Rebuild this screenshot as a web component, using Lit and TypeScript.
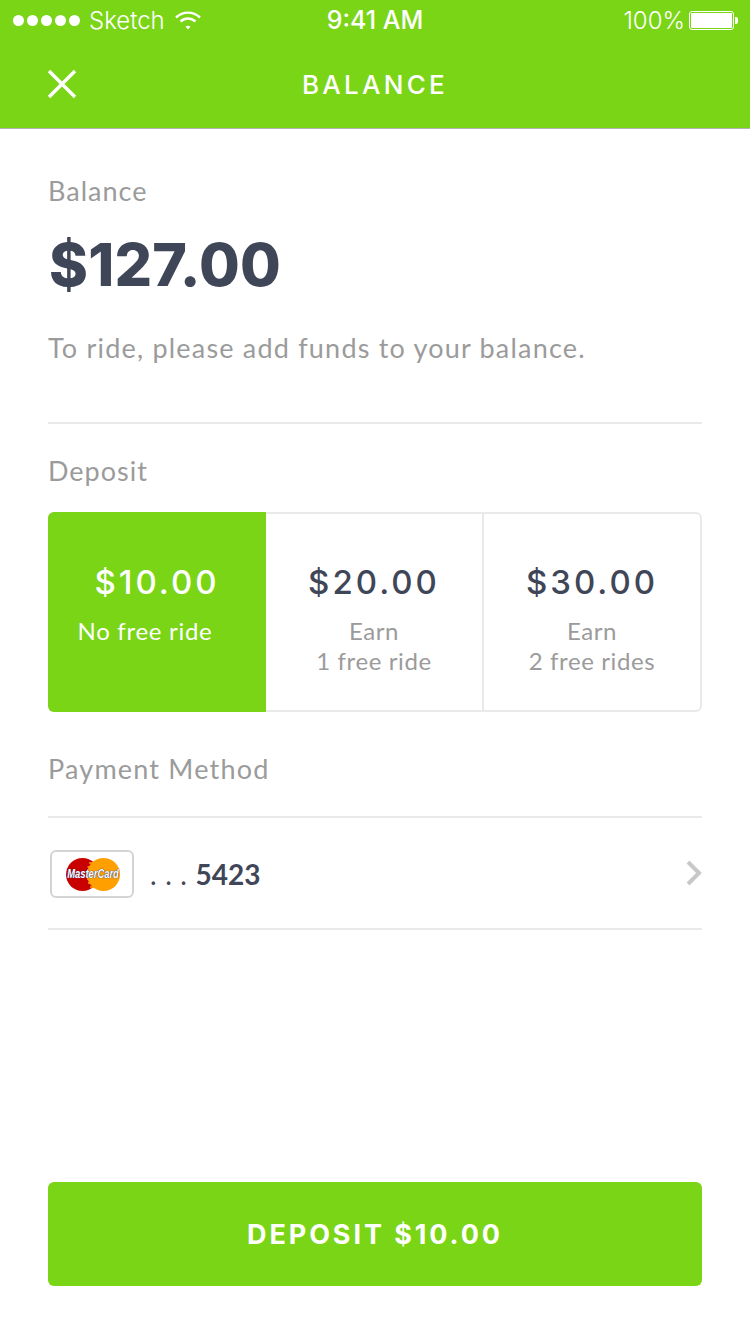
import {html, css, LitElement} from 'lit';
import {customElement} from 'lit/decorators.js';

const options = [
  {amount: '$10.00', lines: ['No free ride'], active: true},
  {amount: '$20.00', lines: ['Earn', '1 free ride'], active: false},
  {amount: '$30.00', lines: ['Earn', '2 free rides'], active: false},
];

@customElement('app-root')
class AppRoot extends LitElement {
  static styles = css`
    :host {
      display: block;
      width: 750px;
      height: 1334px;
      background: #fff;
      font-family: 'Lato', sans-serif;
      overflow: hidden;
    }

    .header {
      background: #7ad516;
      color: #fff;
      height: 128px;
      border-bottom: 1px solid #b2b2b2;
    }

    .status {
      height: 40px;
      display: grid;
      grid-template-columns: 1fr auto 1fr;
      align-items: center;
      padding: 0 12px;
      font-family: 'Inter', sans-serif;
      font-weight: 300;
      font-size: 24px;
    }

    .status-left,
    .status-right {
      display: flex;
      align-items: center;
    }

    .status-right {
      justify-content: flex-end;
    }

    .dots {
      display: flex;
      gap: 3px;
      margin-right: 9px;
      margin-left: 1px;
    }

    .dot {
      width: 11px;
      height: 11px;
      border-radius: 50%;
      background: #fff;
    }

    .wifi {
      margin-left: 10px;
    }

    .time {
      font-weight: 500;
      font-size: 25px;
    }

    .battery {
      display: flex;
      align-items: center;
      margin-left: 4px;
    }

    .battery-body {
      width: 45px;
      height: 19px;
      box-sizing: border-box;
      border: 1px solid #fff;
      border-radius: 3px;
      padding: 1px;
    }

    .battery-fill {
      height: 100%;
      background: #fff;
      border-radius: 1px;
    }

    .battery-cap {
      width: 3px;
      height: 7px;
      margin-left: 1px;
      background: #fff;
      border-radius: 0 2px 2px 0;
    }

    .nav {
      height: 88px;
      display: flex;
      align-items: center;
      justify-content: center;
      position: relative;
    }

    .close {
      position: absolute;
      left: 47px;
      top: 29px;
      display: block;
    }

    .title {
      font-family: 'Inter', sans-serif;
      font-size: 26px;
      font-weight: 500;
      letter-spacing: 3.3px;
    }

    .content {
      padding: 0 48px;
    }

    .label {
      color: #9b9b9b;
      font-size: 27px;
      line-height: 36px;
      letter-spacing: 1px;
    }

    .balance {
      padding: 44px 0 56px;
      border-bottom: 2px solid #e9e9e9;
    }

    .balance-value {
      margin: 20px 0 0 1px;
      color: #3f4657;
      font-family: 'Inter', sans-serif;
      font-size: 59px;
      line-height: 72px;
      font-weight: 800;
      letter-spacing: 0.2px;
    }

    .hint {
      margin-top: 29px;
      letter-spacing: 1.2px;
    }

    .deposit-label {
      margin-top: 29px;
    }

    .options {
      margin-top: 23px;
      display: grid;
      grid-template-columns: 216px 216px 218px;
      height: 200px;
      box-sizing: border-box;
      border: 2px solid #e9e9e9;
      border-radius: 6px;
    }

    .option {
      box-sizing: border-box;
      margin: -2px 0;
      padding-top: 48px;
      text-align: center;
      color: #9b9b9b;
    }

    .option:first-child {
      margin-left: -2px;
    }

    .option:last-child {
      margin-right: -2px;
      padding-right: 2px;
      border-left: 2px solid #e9e9e9;
    }

    .option.active {
      background: #7ad516;
      color: #fff;
      border-radius: 6px 0 0 6px;
    }

    .amount {
      color: #3f4657;
      font-family: 'Inter', sans-serif;
      font-size: 33px;
      line-height: 44px;
      font-weight: 500;
      letter-spacing: 3px;
    }

    .active .amount {
      color: #fff;
    }

    .note {
      margin-top: 12px;
      font-size: 24px;
      line-height: 30px;
      letter-spacing: 0.6px;
    }

    .active .note {
      padding-right: 24px;
      letter-spacing: 0.7px;
    }

    .method-label {
      margin-top: 39px;
      letter-spacing: 1.2px;
    }

    .card-row {
      margin-top: 29px;
      height: 114px;
      box-sizing: border-box;
      border-top: 2px solid #e9e9e9;
      border-bottom: 2px solid #e9e9e9;
      display: flex;
      align-items: center;
      padding: 2px 0 0 2px;
    }

    .card {
      width: 84px;
      height: 48px;
      box-sizing: border-box;
      border: 2px solid #d4d4d4;
      border-radius: 6px;
      padding-left: 2px;
      display: flex;
      align-items: center;
      justify-content: center;
      position: relative;
    }

    .card-name {
      position: absolute;
      left: 2px;
      right: 0;
      top: 13px;
      text-align: center;
      color: #fff;
      font-family: 'Liberation Sans', sans-serif;
      font-size: 12px;
      line-height: 18px;
      font-weight: 700;
      font-style: italic;
      transform: scaleX(0.78);
      text-shadow: 0 0 1px #27306b, 0 0 1px #27306b;
    }

    .card-number {
      margin-left: 16px;
      color: #3f4657;
      font-size: 28px;
      font-weight: 700;
      flex: 1;
    }

    .card-dots {
      font-weight: 400;
      letter-spacing: 0.7px;
    }

    .chevron {
      margin-top: -2px;
    }

    .submit {
      display: block;
      width: 100%;
      margin-top: 252px;
      height: 104px;
      border: none;
      border-radius: 6px;
      background: #7ad516;
      color: #fff;
      font-family: 'Inter', sans-serif;
      font-size: 27px;
      font-weight: 700;
      letter-spacing: 2.9px;
    }
  `;

  render() {
    return html`
      <div class="header">
        <div class="status">
          <div class="status-left">
            <div class="dots">
              ${[0, 1, 2, 3, 4].map(() => html`<span class="dot"></span>`)}
            </div>
            <span>Sketch</span>
            <svg class="wifi" width="26" height="19" viewBox="0 0 26 19" fill="none" stroke="#fff" stroke-width="2.4">
              <path d="M1 6.5C8 0 18 0 25 6.5" />
              <path d="M5.5 10.5C10 6.5 16 6.5 20.5 10.5" />
              <path d="M10.5 15.5L13 18.5L15.5 15.5C14 14.4 12 14.4 10.5 15.5Z" fill="#fff" stroke="none" />
            </svg>
          </div>
          <div class="time">9:41 AM</div>
          <div class="status-right">
            <span>100%</span>
            <div class="battery">
              <div class="battery-body"><div class="battery-fill"></div></div>
              <div class="battery-cap"></div>
            </div>
          </div>
        </div>
        <div class="nav">
          <svg class="close" width="30" height="30" viewBox="0 0 30 30" stroke="#fff" stroke-width="3.4">
            <path d="M2 2L28 28M28 2L2 28" />
          </svg>
          <span class="title">BALANCE</span>
        </div>
      </div>
      <div class="content">
        <div class="balance">
          <div class="label">Balance</div>
          <div class="balance-value">$127.00</div>
          <div class="label hint">To ride, please add funds to your balance.</div>
        </div>
        <div class="label deposit-label">Deposit</div>
        <div class="options">
          ${options.map(
            (o) => html`
              <div class="option ${o.active ? 'active' : ''}">
                <div class="amount">${o.amount}</div>
                <div class="note">${o.lines.map((l) => html`<div>${l}</div>`)}</div>
              </div>
            `
          )}
        </div>
        <div class="label method-label">Payment Method</div>
        <div class="card-row">
          <div class="card">
            <svg width="54" height="33" viewBox="0 0 54 33">
              <circle cx="16.5" cy="16.5" r="16.5" fill="#c90000" />
              <circle cx="37.5" cy="16.5" r="16.5" fill="#ffa000" />
              <path d="M23 5h9M21.5 9h11M21 13h11M21 21h11M22 25h10M24 29h7" stroke="#ffa000" stroke-width="1.6" />
            </svg>
            <span class="card-name">MasterCard</span>
          </div>
          <div class="card-number"><span class="card-dots">. . . </span>5423</div>
          <svg class="chevron" width="18" height="26" viewBox="0 0 18 26" fill="none" stroke="#c8c8c8" stroke-width="4">
            <path d="M4 2L15 13L4 24" />
          </svg>
        </div>
        <button class="submit">DEPOSIT $10.00</button>
      </div>
    `;
  }
}
